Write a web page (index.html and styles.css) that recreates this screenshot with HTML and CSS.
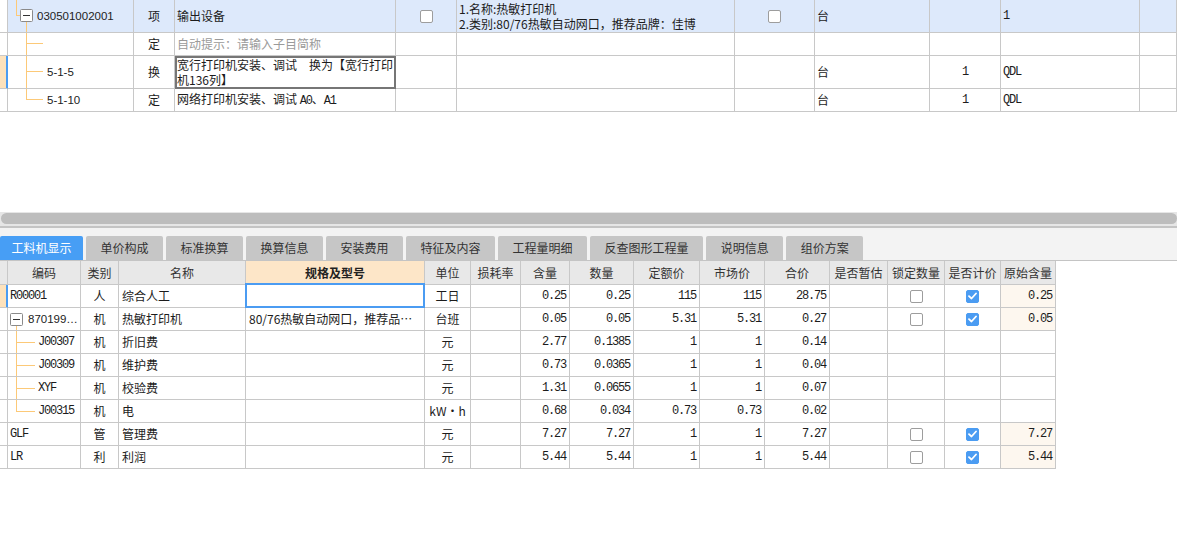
FILE: index.html
```html
<!DOCTYPE html>
<html lang="zh-CN">
<head>
<meta charset="utf-8">
<link rel="stylesheet" href="styles.css">
</head>
<body>
<div class="top-pane">
  <div class="trow h33 hl">
    <div class="c rh"></div>
    <div class="c tc"><svg class="tree" width="29" height="32"><line x1="8.5" y1="0" x2="8.5" y2="15.5" class="tl"/><line x1="8" y1="15.5" x2="12" y2="15.5" class="tl"/><rect x="12.5" y="9.5" width="12" height="12" rx="1" class="box"/><line x1="15" y1="15.5" x2="22" y2="15.5" class="minus"/><line x1="18.5" y1="22" x2="18.5" y2="32" class="tl"/></svg><span class="code">030501002001</span></div>
    <div class="c ctr">项</div>
    <div class="c">输出设备</div>
    <div class="c ctr"><span class="cb"></span></div>
    <div class="c"><div class="desc"><div>1.名称:热敏打印机</div><div>2.类别:80/76热敏自动网口，推荐品牌：佳博</div></div></div>
    <div class="c ctr"><span class="cb"></span></div>
    <div class="c">台</div>
    <div class="c"></div>
    <div class="c m">1</div>
    <div class="c"></div>
  </div>
  <div class="trow h23">
    <div class="c rh"></div>
    <div class="c tc"><svg class="tree" width="39" height="22"><line x1="18.5" y1="0" x2="18.5" y2="22" class="tl"/><line x1="18" y1="10.5" x2="35" y2="10.5" class="tl"/></svg></div>
    <div class="c ctr">定</div>
    <div class="c hint">自动提示：请输入子目简称</div>
    <div class="c"></div>
    <div class="c"></div>
    <div class="c"></div>
    <div class="c"></div>
    <div class="c"></div>
    <div class="c"></div>
    <div class="c"></div>
  </div>
  <div class="trow h33">
    <div class="c rh sel"></div>
    <div class="c tc"><svg class="tree" width="39" height="32"><line x1="18.5" y1="0" x2="18.5" y2="32" class="tl"/><line x1="18" y1="15.5" x2="35" y2="15.5" class="tl"/></svg><span class="code">5-1-5</span></div>
    <div class="c ctr">换</div>
    <div class="c edit"><div class="wrap"><div>宽行打印机安装、调试　换为【宽行打印</div><div>机136列】</div></div></div>
    <div class="c"></div>
    <div class="c"></div>
    <div class="c"></div>
    <div class="c">台</div>
    <div class="c ctr m">1</div>
    <div class="c m">QDL</div>
    <div class="c"></div>
  </div>
  <div class="trow h23">
    <div class="c rh"></div>
    <div class="c tc"><svg class="tree" width="39" height="22"><line x1="18.5" y1="0" x2="18.5" y2="11" class="tl"/><line x1="18" y1="10.5" x2="35" y2="10.5" class="tl"/></svg><span class="code">5-1-10</span></div>
    <div class="c ctr">定</div>
    <div class="c"><span>网络打印机安装、调试&nbsp;<span class="m">A0</span>、<span class="m">A1</span></span></div>
    <div class="c"></div>
    <div class="c"></div>
    <div class="c"></div>
    <div class="c">台</div>
    <div class="c ctr m">1</div>
    <div class="c m">QDL</div>
    <div class="c"></div>
  </div>
</div>

<div class="hscroll"><div class="thumb"></div></div>

<div class="tabs">
  <div class="tab on">工料机显示</div>
  <div class="tab">单价构成</div>
  <div class="tab">标准换算</div>
  <div class="tab">换算信息</div>
  <div class="tab">安装费用</div>
  <div class="tab">特征及内容</div>
  <div class="tab">工程量明细</div>
  <div class="tab">反查图形工程量</div>
  <div class="tab">说明信息</div>
  <div class="tab">组价方案</div>
</div>

<div class="bgrid">
  <div class="brow head">
    <div class="c"></div>
    <div class="c ctr">编码</div>
    <div class="c ctr">类别</div>
    <div class="c ctr">名称</div>
    <div class="c ctr spec">规格及型号</div>
    <div class="c ctr">单位</div>
    <div class="c ctr">损耗率</div>
    <div class="c ctr">含量</div>
    <div class="c ctr">数量</div>
    <div class="c ctr">定额价</div>
    <div class="c ctr">市场价</div>
    <div class="c ctr">合价</div>
    <div class="c ctr">是否暂估</div>
    <div class="c ctr">锁定数量</div>
    <div class="c ctr">是否计价</div>
    <div class="c ctr">原始含量</div>
  </div>

  <div class="brow">
    <div class="c rh sel"></div>
    <div class="c m">R00001</div>
    <div class="c ctr">人</div>
    <div class="c nm">综合人工</div>
    <div class="c focus"></div>
    <div class="c ctr">工日</div>
    <div class="c"></div>
    <div class="c rgt m">0.25</div>
    <div class="c rgt m">0.25</div>
    <div class="c rgt m">115</div>
    <div class="c rgt m">115</div>
    <div class="c rgt m">28.75</div>
    <div class="c"></div>
    <div class="c ctr"><span class="cb"></span></div>
    <div class="c ctr"><span class="cb on"><svg width="9" height="8" viewBox="0 0 9 8"><path d="M1 4.2 L3.5 6.5 L8 1.5" class="ck"/></svg></span></div>
    <div class="c rgt m orig">0.25</div>
  </div>

  <div class="brow">
    <div class="c rh"></div>
    <div class="c tc"><svg class="tree" width="20" height="22"><rect x="2.5" y="5.5" width="12" height="12" rx="1" class="box"/><line x1="5" y1="11.5" x2="12" y2="11.5" class="minus"/><line x1="8.5" y1="18" x2="8.5" y2="22" class="tl"/></svg><span class="code">870199…</span></div>
    <div class="c ctr">机</div>
    <div class="c nm">热敏打印机</div>
    <div class="c nm">80/76热敏自动网口，推荐品…</div>
    <div class="c ctr">台班</div>
    <div class="c"></div>
    <div class="c rgt m">0.05</div>
    <div class="c rgt m">0.05</div>
    <div class="c rgt m">5.31</div>
    <div class="c rgt m">5.31</div>
    <div class="c rgt m">0.27</div>
    <div class="c"></div>
    <div class="c ctr"><span class="cb"></span></div>
    <div class="c ctr"><span class="cb on"><svg width="9" height="8" viewBox="0 0 9 8"><path d="M1 4.2 L3.5 6.5 L8 1.5" class="ck"/></svg></span></div>
    <div class="c rgt m orig">0.05</div>
  </div>

  <div class="brow">
    <div class="c rh"></div>
    <div class="c tc"><svg class="tree" width="30" height="22"><line x1="8.5" y1="0" x2="8.5" y2="22" class="tl"/><line x1="8" y1="11.5" x2="27" y2="11.5" class="tl"/></svg><span class="m">J00307</span></div>
    <div class="c ctr">机</div>
    <div class="c nm">折旧费</div>
    <div class="c"></div>
    <div class="c ctr">元</div>
    <div class="c"></div>
    <div class="c rgt m">2.77</div>
    <div class="c rgt m">0.1385</div>
    <div class="c rgt m">1</div>
    <div class="c rgt m">1</div>
    <div class="c rgt m">0.14</div>
    <div class="c"></div>
    <div class="c"></div>
    <div class="c"></div>
    <div class="c"></div>
  </div>

  <div class="brow">
    <div class="c rh"></div>
    <div class="c tc"><svg class="tree" width="30" height="22"><line x1="8.5" y1="0" x2="8.5" y2="22" class="tl"/><line x1="8" y1="11.5" x2="27" y2="11.5" class="tl"/></svg><span class="m">J00309</span></div>
    <div class="c ctr">机</div>
    <div class="c nm">维护费</div>
    <div class="c"></div>
    <div class="c ctr">元</div>
    <div class="c"></div>
    <div class="c rgt m">0.73</div>
    <div class="c rgt m">0.0365</div>
    <div class="c rgt m">1</div>
    <div class="c rgt m">1</div>
    <div class="c rgt m">0.04</div>
    <div class="c"></div>
    <div class="c"></div>
    <div class="c"></div>
    <div class="c"></div>
  </div>

  <div class="brow">
    <div class="c rh"></div>
    <div class="c tc"><svg class="tree" width="30" height="22"><line x1="8.5" y1="0" x2="8.5" y2="22" class="tl"/><line x1="8" y1="11.5" x2="27" y2="11.5" class="tl"/></svg><span class="m">XYF</span></div>
    <div class="c ctr">机</div>
    <div class="c nm">校验费</div>
    <div class="c"></div>
    <div class="c ctr">元</div>
    <div class="c"></div>
    <div class="c rgt m">1.31</div>
    <div class="c rgt m">0.0655</div>
    <div class="c rgt m">1</div>
    <div class="c rgt m">1</div>
    <div class="c rgt m">0.07</div>
    <div class="c"></div>
    <div class="c"></div>
    <div class="c"></div>
    <div class="c"></div>
  </div>

  <div class="brow">
    <div class="c rh"></div>
    <div class="c tc"><svg class="tree" width="30" height="22"><line x1="8.5" y1="0" x2="8.5" y2="12" class="tl"/><line x1="8" y1="11.5" x2="27" y2="11.5" class="tl"/></svg><span class="m">J00315</span></div>
    <div class="c ctr">机</div>
    <div class="c nm">电</div>
    <div class="c"></div>
    <div class="c ctr">kW・h</div>
    <div class="c"></div>
    <div class="c rgt m">0.68</div>
    <div class="c rgt m">0.034</div>
    <div class="c rgt m">0.73</div>
    <div class="c rgt m">0.73</div>
    <div class="c rgt m">0.02</div>
    <div class="c"></div>
    <div class="c"></div>
    <div class="c"></div>
    <div class="c"></div>
  </div>

  <div class="brow">
    <div class="c rh"></div>
    <div class="c m">GLF</div>
    <div class="c ctr">管</div>
    <div class="c nm">管理费</div>
    <div class="c"></div>
    <div class="c ctr">元</div>
    <div class="c"></div>
    <div class="c rgt m">7.27</div>
    <div class="c rgt m">7.27</div>
    <div class="c rgt m">1</div>
    <div class="c rgt m">1</div>
    <div class="c rgt m">7.27</div>
    <div class="c"></div>
    <div class="c ctr"><span class="cb"></span></div>
    <div class="c ctr"><span class="cb on"><svg width="9" height="8" viewBox="0 0 9 8"><path d="M1 4.2 L3.5 6.5 L8 1.5" class="ck"/></svg></span></div>
    <div class="c rgt m orig">7.27</div>
  </div>

  <div class="brow">
    <div class="c rh"></div>
    <div class="c m">LR</div>
    <div class="c ctr">利</div>
    <div class="c nm">利润</div>
    <div class="c"></div>
    <div class="c ctr">元</div>
    <div class="c"></div>
    <div class="c rgt m">5.44</div>
    <div class="c rgt m">5.44</div>
    <div class="c rgt m">1</div>
    <div class="c rgt m">1</div>
    <div class="c rgt m">5.44</div>
    <div class="c"></div>
    <div class="c ctr"><span class="cb"></span></div>
    <div class="c ctr"><span class="cb on"><svg width="9" height="8" viewBox="0 0 9 8"><path d="M1 4.2 L3.5 6.5 L8 1.5" class="ck"/></svg></span></div>
    <div class="c rgt m orig">5.44</div>
  </div>
</div>
</body>
</html>
```
FILE: styles.css
```css
* { box-sizing: border-box; margin: 0; padding: 0; }
html, body { width: 1177px; height: 537px; overflow: hidden; background: #fff; }
body {
  font-family: "Noto Sans CJK SC", "Noto Sans", sans-serif;
  font-size: 12px;
  line-height: 14px;
  color: #1c1c1c;
}

/* ---------- top grid ---------- */
.top-pane { height: 212px; }
.trow {
  display: grid;
  grid-template-columns: 8px 126px 41px 221px 61px 278px 80px 115px 71px 139px 1fr;
}
.h33 { height: 33px; }
.h23 { height: 23px; }

.c {
  display: flex;
  align-items: center;
  min-width: 0;
  padding: 0 2px;
  border-right: 1px solid #c8c8c8;
  border-bottom: 1px solid #c8c8c8;
  white-space: nowrap;
  overflow: hidden;
}
.tc { padding: 0; }
.ctr { justify-content: center; }
.rgt { justify-content: flex-end; padding-right: 3px; }
.nm { padding-left: 3px; }
.hl .c:not(.rh) { background: #dde9fb; }
.rh.sel {
  background: #fde2bc;
  border-right-color: #4b9cf2;
  box-shadow: inset -1px 0 0 #4b9cf2;
}
.hint { color: #9a9a9a; }
.desc { display: flex; flex-direction: column; gap: 1px; line-height: 14px; font-size: 12px; }
.wrap { display: flex; flex-direction: column; gap: 1px; line-height: 14px; }
.edit { position: relative; overflow: visible; padding: 0 2px; }
.edit::after {
  content: "";
  position: absolute;
  top: 0; left: 0; right: -1px; bottom: -1px;
  border: 2px solid #767676;
}

.tree { flex: none; display: block; }
.tl { stroke: #fcc978; stroke-width: 1; }
.box { fill: #fff; stroke: #8a8a8a; stroke-width: 1; }
.minus { stroke: #333; stroke-width: 1; }
.code { font-family: "Liberation Sans", sans-serif; font-size: 11.5px; color: #222; }

.m {
  font-family: "Liberation Mono", monospace;
  font-size: 12px;
  letter-spacing: -1.2px;
}

.cb {
  width: 13px; height: 13px;
  border: 1px solid #9d9d9d;
  border-radius: 2px;
  background: #fff;
  display: flex; align-items: center; justify-content: center;
}
.cb.on { background: #4b9cf2; border-color: #4b9cf2; }
.ck { fill: none; stroke: #fff; stroke-width: 1.8; stroke-linecap: round; stroke-linejoin: round; }

/* ---------- scrollbar ---------- */
.hscroll {
  height: 16px;
  background: #e6e6e6;
  padding: 1px 0 0 1px;
  border-bottom: 2px solid #c4c4c4;
}
.thumb { height: 11px; background: #bdbdbd; border-radius: 6px; }

/* ---------- tabs ---------- */
.tabs {
  display: flex;
  gap: 3px;
  height: 33px;
  padding-top: 8px;
  background: #f3f3f3;
  border-bottom: 1px solid #c4c4c4;
}
.tab {
  height: 24px;
  padding: 0 14.5px;
  display: flex;
  align-items: center;
  background: #c6c6c6;
  color: #333;
  border-radius: 2px 2px 0 0;
  font-size: 12px;
}
.tab.on { background: #479ef5; color: #fff; padding: 0 11.5px; }

/* ---------- bottom grid ---------- */
.bgrid { width: 1056px; }
.brow {
  display: grid;
  grid-template-columns: 8px 73px 38px 127px 179px 46px 50px 49px 64px 66px 65px 65px 58px 57px 56px 55px;
  height: 23px;
}
.brow.head { height: 24px; background: #e8e8e8; color: #333; }
.spec { background: #fde6c8; font-weight: bold; color: #222; }
.orig { background: #fdf7ef; }
.focus { position: relative; overflow: visible; }
.focus::after {
  content: "";
  position: absolute;
  top: -2px; left: -1px; right: -1px; bottom: -1px;
  border: 2px solid #4b9cf2;
}
```
